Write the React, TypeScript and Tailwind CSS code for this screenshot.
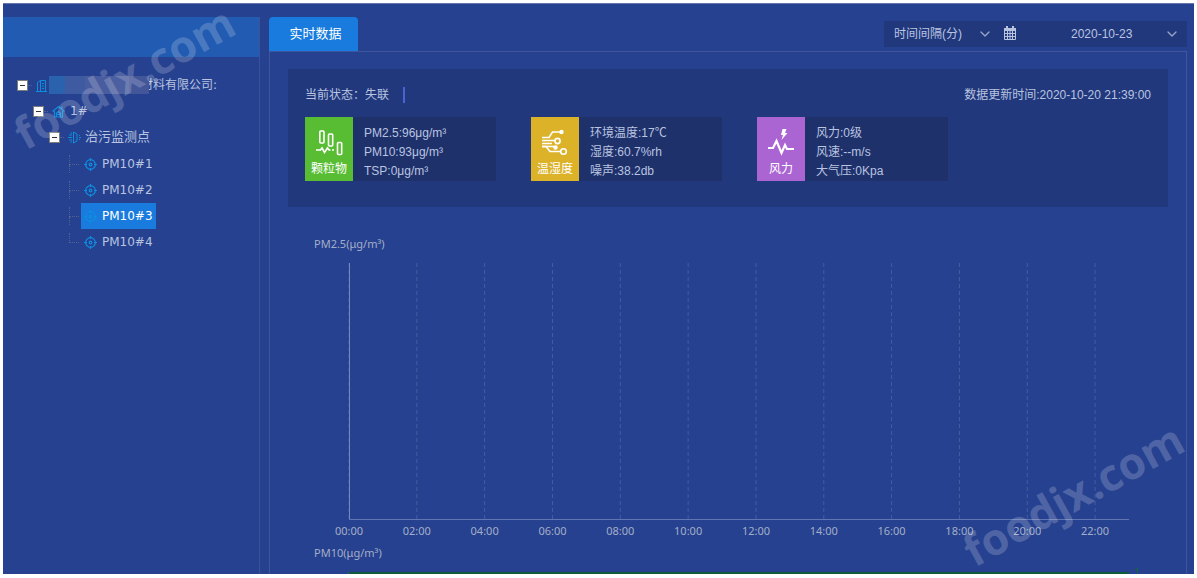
import React from 'react'
import { ChevronDown } from 'lucide-react'

interface Metric {
  id: string
  label: string
  color: string
  icon: React.ReactNode
  lines: string[]
}

const metrics: Metric[] = [
  {
    id: 'particles',
    label: '颗粒物',
    color: 'bg-[#58bd33]',
    icon: <ParticleIcon />,
    lines: ['PM2.5:96μg/m³', 'PM10:93μg/m³', 'TSP:0μg/m³']
  },
  {
    id: 'climate',
    label: '温湿度',
    color: 'bg-[#dbb228]',
    icon: <CircuitIcon />,
    lines: ['环境温度:17℃', '湿度:60.7%rh', '噪声:38.2db']
  },
  {
    id: 'wind',
    label: '风力',
    color: 'bg-[#ab65d3]',
    icon: <WindIcon />,
    lines: ['风力:0级', '风速:--m/s', '大气压:0Kpa']
  }
]

const points = ['PM10#1', 'PM10#2', 'PM10#3', 'PM10#4']

const hours = ['00:00', '02:00', '04:00', '06:00', '08:00', '10:00', '12:00', '14:00', '16:00', '18:00', '20:00', '22:00']

function ParticleIcon() {
  return (
    <svg className="w-7 h-7" viewBox="0 0 28 28" fill="none" stroke="white" strokeWidth="1.600">
      <rect x="4.800" y="2" width="4.200" height="12" rx="1" />
      <rect x="13.500" y="5" width="4.200" height="12" rx="1" />
      <rect x="22.500" y="13.500" width="4.200" height="12" rx="1" />
      <path d="M1 21h4.500l1.500-2 2.500 4.500 3-4.500 1.500 2h1.500M17 21h2" />
    </svg>
  )
}

function CircuitIcon() {
  return (
    <svg className="w-7 h-7" viewBox="0 0 28 28" fill="none" stroke="white" strokeWidth="1.600">
      <path d="M1 8.500h7l3.500-5.500h8" />
      <circle cx="20.500" cy="3" r="2.200" fill="white" stroke="none" />
      <path d="M1 11.500h12.500M1 14.500h10" />
      <circle cx="16.500" cy="12" r="2.600" />
      <path d="M1 17.500h12" />
      <circle cx="14.500" cy="18.500" r="2.200" fill="white" stroke="none" />
      <path d="M1 17.500h4l4 5h10.500" />
      <circle cx="22.500" cy="22.500" r="2.800" />
    </svg>
  )
}

function WindIcon() {
  return (
    <svg className="w-7 h-7" viewBox="0 0 28 28" fill="none" stroke="white">
      <path d="M15.500 0h4l-1.500 4h2.500l-6 7 1.500-5h-2z" fill="white" stroke="none" />
      <path d="M1 19h5l3.500-7 5 12 3.500-8 2 4h7" strokeWidth="2.200" />
    </svg>
  )
}

function CalendarIcon() {
  return (
    <svg className="w-3 h-[14px] shrink-0" viewBox="0 0 12 14" fill="none" stroke="currentColor">
      <path d="M0 2h12v3H0z" fill="currentColor" stroke="none" />
      <path d="M3 0v3M9 0v3" strokeWidth="2" />
      <path d="M.5 4.500h11v9H.5zM0 7.500h12M0 10.500h12M3.500 5v9M6 5v9M8.500 5v9" />
    </svg>
  )
}

function BuildingIcon() {
  return (
    <svg className="w-[13px] h-[13px] text-[#0f8ee0]" viewBox="0 0 13 13" fill="none" stroke="currentColor">
      <path d="M1.500 12V3.500l3-2h5V12M4.500 1.500V12M0 12.500h11M6 4.500h2M6 7h2M6 9.500h2" />
    </svg>
  )
}

function HomeIcon() {
  return (
    <svg className="w-[13px] h-[13px] text-[#0f8ee0]" viewBox="0 0 13 13" fill="none" stroke="currentColor" strokeWidth="1.200">
      <path d="M.5 6.500l6-5 6 5M2.500 6v6h8V6M10 3.500V1.500M4.500 12V8l2-1.500 2 1.500v4M5 9.500h3" />
    </svg>
  )
}

function MonitorIcon() {
  return (
    <svg className="w-[13px] h-[13px] text-[#0f8ee0]" viewBox="0 0 13 13" fill="none" stroke="currentColor">
      <path d="M5.500 1v11l3.500-2V3z" />
      <path d="M1 4h3M0 6.500h4M1 9h3M2.500 1.500l1.500 1M2.500 11.500l1.500-1M11 4.500h1M11 6.500h2M11 8.500h1" />
    </svg>
  )
}

function TargetIcon() {
  return (
    <svg className="w-[13px] h-[13px] shrink-0 text-[#0f8ee0]" viewBox="0 0 13 13" fill="none" stroke="currentColor" strokeWidth="1.200">
      <circle cx="6.500" cy="6.500" r="4.800" />
      <circle cx="6.500" cy="6.500" r="1.300" />
      <path d="M6.500 0v3M6.500 10v3M0 6.500h3M10 6.500h3" />
    </svg>
  )
}

function Toggle({ label }: { label: string }) {
  return (
    <>
      <button
        type="button"
        aria-label={label}
        className="w-[11px] h-[11px] bg-white border border-[#7d7d7d] flex items-center justify-center shrink-0"
      >
        <span className="w-[5px] h-px bg-[#333333]" />
      </button>
      <span className="w-1 mr-1 border-b border-dotted border-[#4e5f94]" />
    </>
  )
}

function Tree() {
  return (
    <ul className="pt-[15px] pl-[14px] text-xs text-[#b9c4e0]">
      <li>
        <div className="h-[26px] flex items-center">
          <Toggle label="收起公司" />
          <BuildingIcon />
          {/* the company name is masked */}
          <div className="relative -mr-2 h-[18px] flex">
            <span className="w-4 bg-[#2a62ad]" />
            <span className="w-5 bg-[#3e5aa0]" />
            <span className="w-6 bg-[#485c9f]" />
            <span className="w-5 bg-[#4c60a1]" />
            <span className="w-5 bg-[#425699]" />
          </div>
          <span>材料有限公司:</span>
        </div>
        <ul className="pl-4">
          <li>
            <div className="h-[26px] flex items-center">
              <Toggle label="收起1#" />
              <HomeIcon />
              <span className="ml-[5px]">1#</span>
            </div>
            <ul className="pl-4">
              <li>
                <div className="h-[26px] flex items-center">
                  <Toggle label="收起监测点" />
                  <MonitorIcon />
                  <span className="ml-1 text-[13px]">治污监测点</span>
                </div>
                <ul className="pl-5 pt-px">
                  {points.map((point, index) => (
                    <li key={point} className="h-[26px] flex items-center gap-[2px]">
                      <span className="w-[10px] h-[18px] flex flex-col">
                        <span className="h-[10px] border-l border-b border-dotted border-[#536393]" />
                        {index < points.length - 1 && (
                          <span className="h-2 border-l border-dotted border-[#536393]" />
                        )}
                      </span>
                      <button
                        type="button"
                        className={`h-[26px] px-[3px] flex items-center gap-[5px] ${
                          point === 'PM10#3' ? 'bg-[#187bdd] text-white' : ''
                        }`}
                      >
                        <TargetIcon />
                        {point}
                      </button>
                    </li>
                  ))}
                </ul>
              </li>
            </ul>
          </li>
        </ul>
      </li>
    </ul>
  )
}

interface ChartProps {
  title: string
  limit?: string
  showHours?: boolean
}

function Chart({ title, limit, showHours }: ChartProps) {
  return (
    <section className="pl-11 pr-[57px] text-[11px] text-[#a3afc8] font-['Noto_Sans','Noto_Sans_CJK_SC',sans-serif]">
      <h3 className="leading-4">{title}</h3>
      <div className="pl-[35px] pt-[11px]">
        <svg className="block w-full h-[282px] overflow-visible">
          {hours.map((hour, index) => {
            const x = `${(index / 11.5) * 100}%`
            return (
              <g key={hour}>
                <line x1={x} x2={x} y1="0" y2="256" stroke="#455ca2" strokeDasharray="4 3" />
                {showHours && (
                  <text x={x} y="272" textAnchor="middle" fill="currentColor">{hour}</text>
                )}
              </g>
            )
          })}
          <line x1="0.500" x2="0.500" y1="0" y2="256" stroke="#7588bd" />
          <line x1="0" x2="100%" y1="256.500" y2="256.500" stroke="#6075b2" />
          {limit && (
            <>
              <line x1="0" x2="100%" y1="1" y2="1" stroke="#0f5c3c" strokeWidth="2" />
              <text x="100%" dx="5" y="4" fill="#0f6a3c">{limit}</text>
            </>
          )}
        </svg>
      </div>
    </section>
  )
}

function Watermark({ className }: { className: string }) {
  return (
    <div
      aria-hidden="true"
      className={`absolute -rotate-29 pointer-events-none select-none text-[44px] leading-[60px] font-bold text-white/20 font-['Open_Sans',sans-serif] ${className}`}
    >
      foodjx.com
    </div>
  )
}

export default function App() {
  return (
    <div className="h-screen bg-white p-[3px] pb-1">
      <div className="relative h-full overflow-hidden bg-[#26418f] border-t border-[#6577ae] flex text-[#b9c4e0] font-['Liberation_Sans','Noto_Sans_CJK_SC',sans-serif]">
        <aside className="w-[257px] shrink-0 mt-[13px] border-r border-[#3a529a] font-['DejaVu_Sans','Noto_Sans_CJK_SC',sans-serif]">
          <div className="h-10 bg-[#215bb2]" />
          <Tree />
        </aside>

        <main className="flex-1 min-w-0 ml-[9px] mr-[7px] mt-[13px] flex flex-col">
          <header className="flex justify-between shrink-0">
            <button type="button" className="h-[34px] w-[89px] pl-1 rounded-t bg-[#187bdd] text-white text-[13px]">
              实时数据
            </button>
            <div className="mt-1 h-[26px] w-[303px] pl-[10px] pr-2 bg-[#21387c] flex items-center text-xs">
              <select aria-label="时间间隔" className="appearance-none w-[84px] bg-transparent">
                <option>时间间隔(分)</option>
              </select>
              <ChevronDown className="w-4 h-4 -mx-px shrink-0 text-[#98a5c6]" strokeWidth={2} />
              <span className="ml-3 -mt-[2px] mr-[55px]">
                <CalendarIcon />
              </span>
              <select aria-label="日期" className="appearance-none flex-1 bg-transparent">
                <option>2020-10-23</option>
              </select>
              <ChevronDown className="w-4 h-4 -mx-px shrink-0 text-[#98a5c6]" strokeWidth={2} />
            </div>
          </header>

          <div className="flex-1 min-h-0 border border-b-0 border-[#40569c] overflow-hidden">
            <section className="mx-[18px] mt-[17px] h-[138px] px-[17px] pt-4 bg-[#21387c]">
              <div className="h-5 flex items-center justify-between text-xs">
                <p className="flex items-center">
                  当前状态：失联
                  <span className="ml-[14px] w-[2px] h-4 bg-[#4963d2]" />
                </p>
                <p>数据更新时间:2020-10-20 21:39:00</p>
              </div>
              <div className="mt-3 flex gap-[35px]">
                {metrics.map((metric) => (
                  <div key={metric.id} className="w-[191px] h-16 flex bg-[#1f316b]">
                    <div className={`w-12 pt-3 flex flex-col items-center text-white text-xs ${metric.color}`}>
                      {metric.icon}
                      <span className="leading-6">{metric.label}</span>
                    </div>
                    <div className="pl-[11px] pt-[7px] text-xs leading-[19px]">
                      {metric.lines.map((line) => (
                        <p key={line}>{line}</p>
                      ))}
                    </div>
                  </div>
                ))}
              </div>
            </section>

            <div className="pt-[29px]">
              <Chart title="PM2.5(μg/m³)" showHours />
              <Chart title="PM10(μg/m³)" limit="1" />
            </div>
          </div>
        </main>

        <Watermark className="-left-[1px] top-[43px]" />
        <Watermark className="-right-[1px] bottom-[50px]" />
      </div>
    </div>
  )
}
